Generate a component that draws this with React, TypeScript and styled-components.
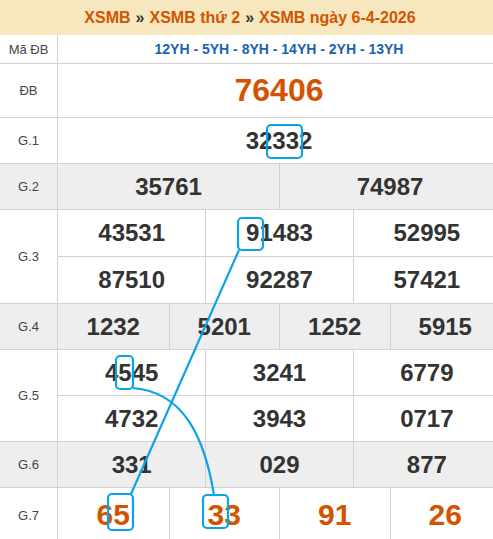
import React from 'react';
import styled, { createGlobalStyle } from 'styled-components';

const GlobalStyle = createGlobalStyle`
  body {
    margin: 0;
    background: #ffffff;
    font-family: "Liberation Sans", Arial, sans-serif;
    overflow: hidden;
  }
`;

const Board = styled.div`
  position: relative;
  width: 500px;
  color: #333333;
`;

const Header = styled.div`
  height: 35px;
  display: flex;
  align-items: center;
  justify-content: center;
  background: #f6e7bf;
  font-size: 16px;
  font-weight: bold;
  color: #d35400;
`;

const Sep = styled.span`
  color: #333333;
  margin: 0 5px;
`;

const Row = styled.div<{ $shade?: boolean; $height: number }>`
  display: grid;
  grid-template-columns: 58px 1fr;
  background: ${p => (p.$shade ? '#eeeeee' : '#ffffff')};
  border-bottom: 1px solid #d2d2d2;
  min-height: ${p => p.$height}px;
`;

const Label = styled.div`
  display: flex;
  align-items: center;
  justify-content: center;
  border-right: 1px solid #d2d2d2;
  font-size: 13px;
  color: #444444;
`;

const Cells = styled.div<{ $cols: number }>`
  display: grid;
  grid-template-columns: repeat(${p => p.$cols}, 1fr);
`;

const Cell = styled.div<{ $size: number; $tone: 'dark' | 'hot' | 'code'; $height: number; $left: boolean; $top: boolean }>`
  display: flex;
  align-items: center;
  justify-content: center;
  height: ${p => p.$height}px;
  font-weight: bold;
  font-size: ${p => p.$size}px;
  color: ${p => (p.$tone === 'hot' ? '#d35400' : p.$tone === 'code' ? '#1a62b0' : '#333333')};
  border-left: ${p => (p.$left ? '1px solid #d2d2d2' : 'none')};
  border-top: ${p => (p.$top ? '1px solid #d2d2d2' : 'none')};
`;

const Overlay = styled.svg`
  position: absolute;
  left: 0;
  top: 0;
  pointer-events: none;
`;

type Prize = {
  label: string;
  values: string[];
  cols: number;
  size: number;
  tone: 'dark' | 'hot' | 'code';
  height: number;
  shade?: boolean;
};

const prizes: Prize[] = [
  { label: 'Mã ĐB', values: ['12YH - 5YH - 8YH - 14YH - 2YH - 13YH'], cols: 1, size: 14, tone: 'code', height: 28 },
  { label: 'ĐB', values: ['76406'], cols: 1, size: 32, tone: 'hot', height: 53 },
  { label: 'G.1', values: ['32332'], cols: 1, size: 24, tone: 'dark', height: 45 },
  { label: 'G.2', values: ['35761', '74987'], cols: 2, size: 24, tone: 'dark', height: 45, shade: true },
  { label: 'G.3', values: ['43531', '91483', '52995', '87510', '92287', '57421'], cols: 3, size: 24, tone: 'dark', height: 46 },
  { label: 'G.4', values: ['1232', '5201', '1252', '5915'], cols: 4, size: 24, tone: 'dark', height: 45, shade: true },
  { label: 'G.5', values: ['4545', '3241', '6779', '4732', '3943', '0717'], cols: 3, size: 24, tone: 'dark', height: 45 },
  { label: 'G.6', values: ['331', '029', '877'], cols: 3, size: 24, tone: 'dark', height: 45, shade: true },
  { label: 'G.7', values: ['65', '33', '91', '26'], cols: 4, size: 30, tone: 'hot', height: 54 },
];

// boxes drawn over matched digits
const marks = [
  { x: 267, y: 125, w: 35, h: 33 },
  { x: 238, y: 218, w: 25, h: 32 },
  { x: 116, y: 356, w: 17, h: 33 },
  { x: 108, y: 494, w: 25, h: 36 },
  { x: 203, y: 495, w: 25, h: 33 },
];

export default function App() {
  return (
    <Board>
      <GlobalStyle />
      <Header>
        XSMB<Sep>»</Sep>XSMB thứ 2<Sep>»</Sep>XSMB ngày 6-4-2026
      </Header>
      {prizes.map(p => (
        <Row key={p.label} $shade={p.shade} $height={p.height}>
          <Label>{p.label}</Label>
          <Cells $cols={p.cols}>
            {p.values.map((v, i) => (
              <Cell
                key={i}
                $size={p.size}
                $tone={p.tone}
                $height={p.height}
                $left={i % p.cols !== 0}
                $top={i >= p.cols}
              >
                {v}
              </Cell>
            ))}
          </Cells>
        </Row>
      ))}
      <Overlay width="500" height="539" viewBox="0 0 500 539">
        <g fill="none" stroke="#0aa3e6" strokeWidth="2.2">
          {marks.map((m, i) => (
            <rect key={i} x={m.x} y={m.y} width={m.w} height={m.h} rx="4" />
          ))}
          <line x1="239" y1="250" x2="131" y2="494" />
          <path d="M133 388 C 185 392, 205 440, 214 495" />
        </g>
      </Overlay>
    </Board>
  );
}
